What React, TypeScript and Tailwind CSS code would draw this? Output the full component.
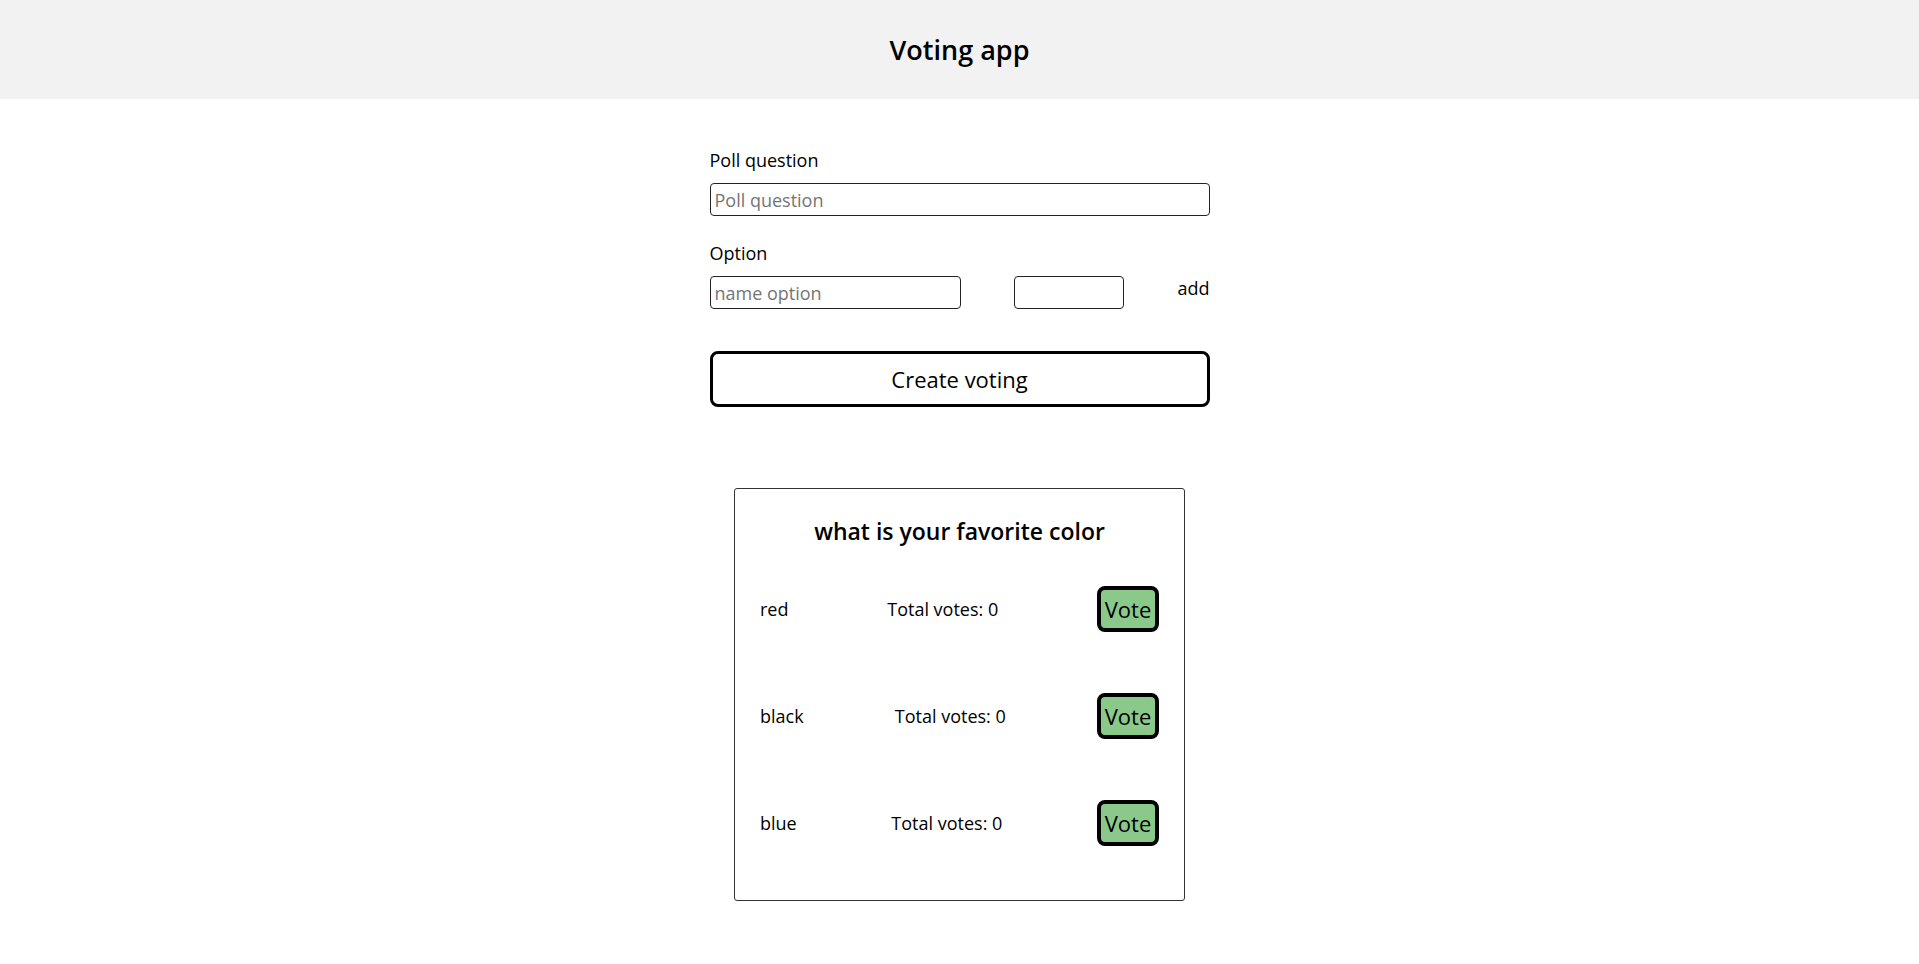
import React, { useState } from 'react';

interface PollOption {
  name: string;
  votes: number;
}

const initialOptions: PollOption[] = [
  { name: 'red', votes: 0 },
  { name: 'black', votes: 0 },
  { name: 'blue', votes: 0 },
];

const App: React.FC = () => {
  const [options, setOptions] = useState<PollOption[]>(initialOptions);

  const vote = (name: string) => {
    setOptions((prev) => prev.map((o) => (o.name === name ? { ...o, votes: o.votes + 1 } : o)));
  };

  return (
    <div className="min-h-screen bg-white text-black" style={{ fontFamily: '"Open Sans", sans-serif' }}>
      <header className="h-[99px] bg-[#f2f2f2] flex items-center justify-center">
        <h1 className="text-[27px] font-semibold leading-none">Voting app</h1>
      </header>

      <main className="flex flex-col items-center pt-[49px] pb-16">
        <form className="w-[500px] flex flex-col" onSubmit={(e) => e.preventDefault()}>
          <label className="text-[18px] leading-6">Poll question</label>
          <input
            type="text"
            placeholder="Poll question"
            className="mt-[11px] h-[33px] w-full border border-[#222] rounded-[4px] px-1 text-[18px] placeholder:text-[#757575] outline-none"
          />

          <label className="mt-[25px] text-[18px] leading-6">Option</label>
          <div className="mt-[11px] flex items-start justify-between">
            <input
              type="text"
              placeholder="name option"
              className="h-[33px] w-[251px] border border-[#222] rounded-[4px] px-1 text-[18px] placeholder:text-[#757575] outline-none"
            />
            <input
              type="text"
              className="h-[33px] w-[110px] border border-[#222] rounded-[4px] px-1 text-[18px] outline-none"
            />
            <button type="button" className="text-[18px] leading-6">add</button>
          </div>

          <button
            type="submit"
            className="mt-[42px] h-[56px] w-full border-[3px] border-black rounded-[8px] bg-white text-[22px]"
          >
            Create voting
          </button>
        </form>

        <section className="mt-[81px] w-[451px] border border-[#333] rounded-[3px] px-[25px] pt-[27px] pb-[54px]">
          <h2 className="text-[23px] font-semibold leading-[30px] text-center">what is your favorite color</h2>
          <div className="mt-[40px] flex flex-col gap-[61px]">
            {options.map((o) => (
              <div key={o.name} className="flex items-center justify-between h-[46px]">
                <span className="text-[18px]">{o.name}</span>
                <span className="text-[18px]">Total votes: {o.votes}</span>
                <button
                  type="button"
                  onClick={() => vote(o.name)}
                  className="h-[46px] w-[62px] border-[4px] border-black rounded-[8px] bg-[#8bc98b] text-[22px] leading-none"
                >
                  Vote
                </button>
              </div>
            ))}
          </div>
        </section>
      </main>
    </div>
  );
};

export default App;
